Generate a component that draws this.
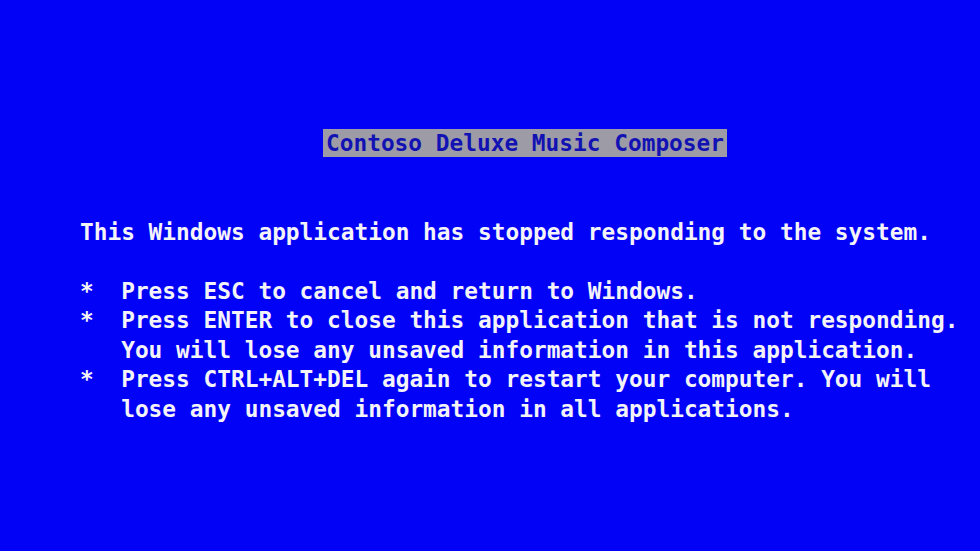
import React from "react";

const lines: string[] = [
  "This Windows application has stopped responding to the system.",
  "",
  "*  Press ESC to cancel and return to Windows.",
  "*  Press ENTER to close this application that is not responding.",
  "   You will lose any unsaved information in this application.",
  "*  Press CTRL+ALT+DEL again to restart your computer. You will",
  "   lose any unsaved information in all applications.",
];

export default function App() {
  return (
    <div
      className="w-[980px] h-[551px] overflow-hidden bg-[#0202f6] text-[#f4f4f8] font-bold text-[22.8px] leading-[29.5px] pt-[129px] pl-[80px]"
      style={{ fontFamily: '"DejaVu Sans Mono", "Liberation Mono", monospace' }}
    >
      <div className="pl-[246px]">
        <span className="bg-[#9d9ca6] text-[#1212b4] -ml-[3px] px-[3px] py-[1px]">Contoso Deluxe Music Composer</span>
      </div>
      <div className="h-[59px]" />
      {lines.map((line, i) => (
        <div key={i} className="whitespace-pre h-[29.5px]">
          {line}
        </div>
      ))}
    </div>
  );
}
